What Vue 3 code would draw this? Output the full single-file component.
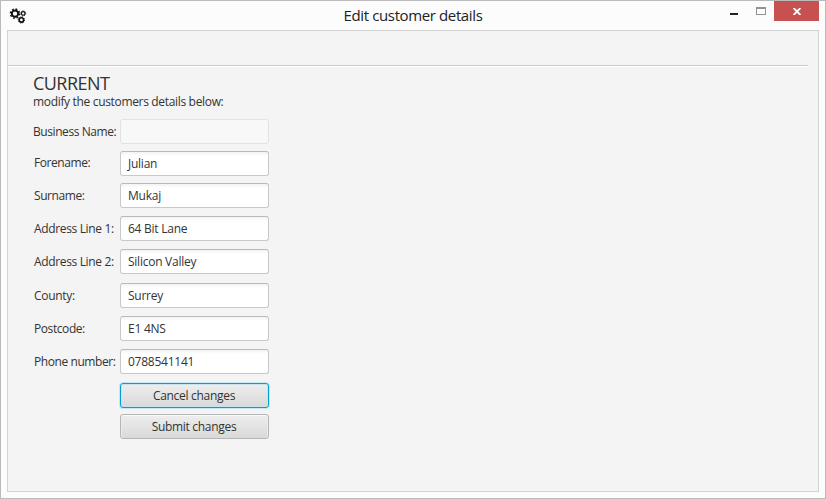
<script setup>
const fields = [
  { label: 'Business Name:', value: '', disabled: true, cls: 'business' },
  { label: 'Forename:', value: 'Julian', cls: 'forename' },
  { label: 'Surname:', value: 'Mukaj', cls: 'surname' },
  { label: 'Address Line 1:', value: '64 Bit Lane', cls: 'address1' },
  { label: 'Address Line 2:', value: 'Silicon Valley', cls: 'address2' },
  { label: 'County:', value: 'Surrey', cls: 'county' },
  { label: 'Postcode:', value: 'E1 4NS', cls: 'postcode' },
  { label: 'Phone number:', value: '0788541141', cls: 'phone' },
]
</script>

<template>
  <div class="window">
    <header class="titlebar">
      <svg class="app-icon" width="18" height="18" viewBox="0 0 18 18" fill="none" stroke="#111">
        <circle cx="5" cy="5.6" r="3.2" stroke-width="2" />
        <circle cx="5" cy="5.6" r="4.6" stroke-width="1.4" stroke-dasharray="1.8 1.81" />
        <circle cx="13.2" cy="5.4" r="1.8" stroke-width="1.2" />
        <circle cx="13.2" cy="5.4" r="2.5" stroke-width=".9" stroke-dasharray=".98 .98" />
        <circle cx="11.4" cy="11.9" r="2.2" stroke-width="1.6" />
        <circle cx="11.4" cy="11.9" r="3.1" stroke-width="1" stroke-dasharray="1.22 1.21" />
      </svg>
      <h1 class="title"><span>Edit customer details</span></h1>
      <div class="controls">
        <svg class="minimize" width="8" height="2"><rect width="8" height="2" fill="#222" /></svg>
        <svg class="maximize" width="10" height="8"><path d="M0 0H10V8H0ZM1 2V7H9V2Z" fill="#929292" fill-rule="evenodd" /></svg>
        <button class="close" aria-label="Close">
          <svg width="8" height="7" viewBox="0 0 8 7"><path d="M.6 0 7.4 7M7.4 0 .6 7" stroke="#fff" stroke-width="1.8" /></svg>
        </button>
      </div>
    </header>
    <main class="panel">
      <div class="toolbar"></div>
      <h2 class="heading"><span>CURRENT</span></h2>
      <p class="hint"><span>modify the customers details below:</span></p>
      <form class="form">
        <div v-for="f in fields" :key="f.label" class="row" :class="f.cls">
          <label class="label"><span>{{ f.label }}</span></label>
          <div class="field" :class="{ disabled: f.disabled }"><span>{{ f.value }}</span></div>
        </div>
        <button type="button" class="btn cancel"><span>Cancel changes</span></button>
        <button type="button" class="btn submit"><span>Submit changes</span></button>
      </form>
    </main>
  </div>
</template>

<style>
body { margin: 0; }
</style>

<style scoped>
.window {
  box-sizing: border-box;
  width: 826px;
  height: 499px;
  padding: 0 6px 6px;
  border: 1px solid #bababa;
  background: #fcfcfc;
  color: #333;
  font: 12px/16px "Open Sans", "Noto Sans", sans-serif;
}
.titlebar {
  display: grid;
  grid-template-columns: 110px 1fr 110px;
  height: 29px;
}
.app-icon { margin: 7px 0 0 3px; overflow: visible; }
.title {
  margin: 4px 0 0;
  text-align: center;
  font-size: 15px;
  line-height: 20px;
  font-weight: 400;
  color: #222;
  letter-spacing: -0.38px;
}
.controls { display: flex; justify-content: flex-end; }
.minimize { margin: 12px 18px 0 0; }
.maximize { margin: 6px 8px 0 0; }
.close {
  display: flex;
  align-items: center;
  justify-content: center;
  width: 45px;
  height: 20px;
  padding: 1px 0 0;
  border: 0;
  background: #c75050;
}
.panel {
  box-sizing: border-box;
  height: 462px;
  border: 1px solid #d2d2d2;
  background: #f4f4f4;
}
.toolbar {
  height: 34px;
  width: 800px;
  border-bottom: 1px solid #cacaca;
  box-shadow: 0 1px #fff;
}
.heading {
  margin: 5px 0 0 25px;
  font-size: 18px;
  line-height: 24px;
  font-weight: 400;
  letter-spacing: -0.55px;
}
.hint { margin: -1px 0 0 25px; letter-spacing: -0.33px; }
.form { padding: 9px 0 0 25px; }
.row { display: flex; height: 25px; margin-bottom: 8px; }
.business, .forename { margin-bottom: 7px; }
.address2 { margin-bottom: 9px; }
.phone { margin-bottom: 9px; }
.label {
  box-sizing: border-box;
  width: 87px;
  padding: 5px 0 0 1px;
  white-space: nowrap;
  letter-spacing: -0.42px;
}
.business .label { padding-left: 0; }
.forename .label { padding-top: 4px; }
.address1 .label, .address2 .label { letter-spacing: -0.35px; }
.county .label { letter-spacing: -0.3px; }
.field {
  box-sizing: border-box;
  width: 149px;
  padding: 4px 7px;
  border: 1px solid #c8c8c8;
  border-top-color: #b9b9b9;
  border-radius: 3px;
  background: linear-gradient(#f3f3f3, #fff 4px);
  letter-spacing: -0.25px;
}
.field.disabled { border-color: #e2e2e2; background: #f8f8f8; }
.btn {
  display: block;
  box-sizing: border-box;
  width: 149px;
  height: 25px;
  margin: 0 0 6px 87px;
  padding: 0 1px 0 0;
  border: 1px solid #b5b5b5;
  border-radius: 3px;
  background: linear-gradient(#eee, #d9d9d9);
  box-shadow: inset 0 1px #fafafa, inset 1px 0 #ececec, inset -1px 0 #ececec;
  color: #333;
  font: inherit;
  letter-spacing: -0.3px;
}
.cancel { border-color: #039ed3; box-shadow: 0 0 0 1px #c5e7f3, inset 0 0 0 1px #cce3eb; }
</style>
